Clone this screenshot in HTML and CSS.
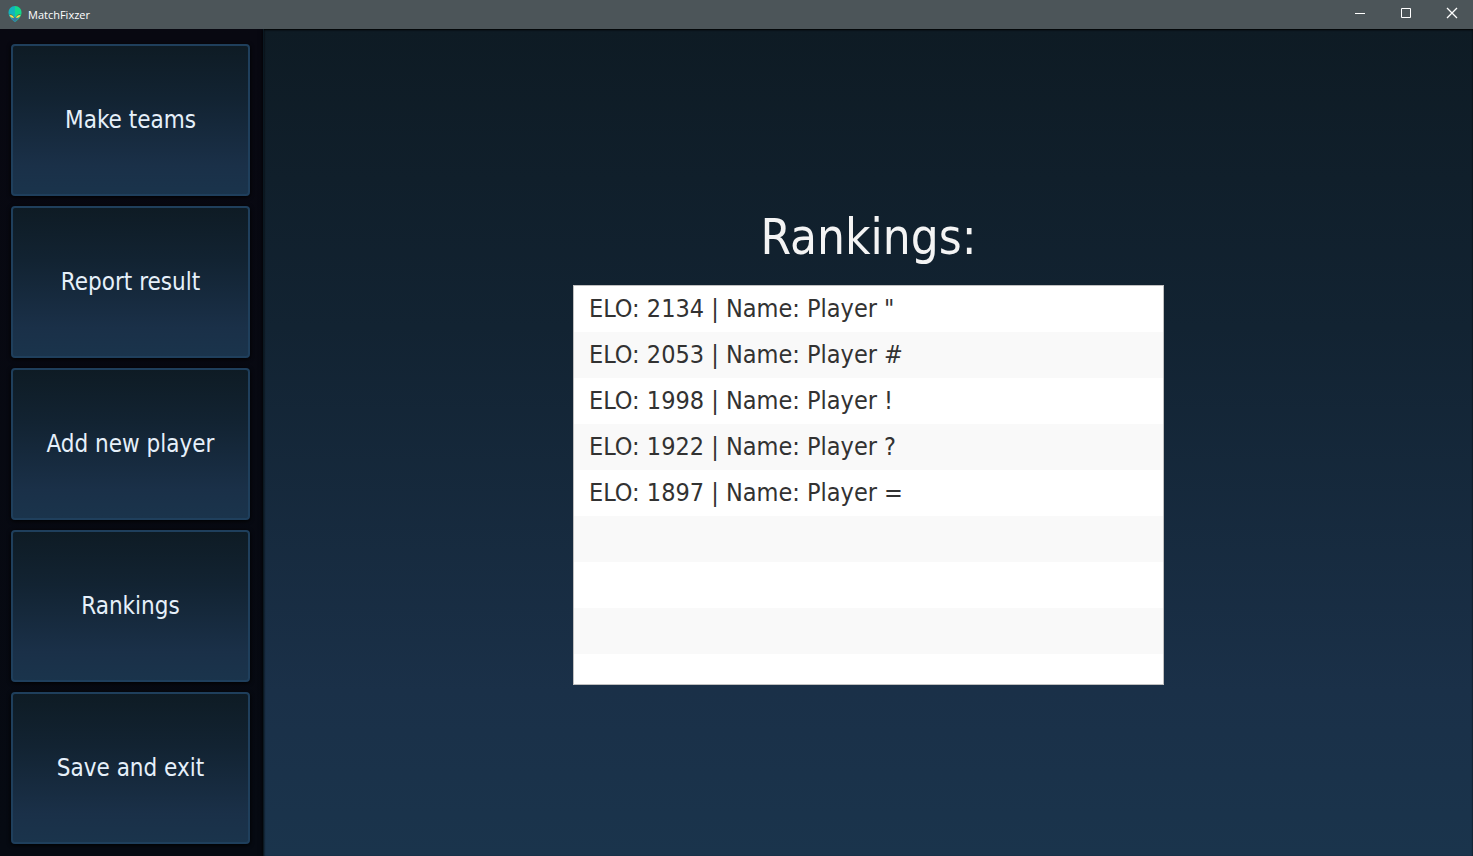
FILE: index.html
```html
<!DOCTYPE html>
<html lang="en">
<head>
<meta charset="utf-8">
<title>MatchFixzer</title>
<link rel="stylesheet" href="styles.css">
</head>
<body>
<header class="titlebar">
  <svg class="logo" viewBox="0 0 14 17" aria-hidden="true">
    <path fill="#12b4bd" d="M7 0C3 0 .5 3 .5 6.500c0 4 3.500 7.500 6.500 9.500z"/>
    <path fill="#13d88c" d="M7 0c4 0 6.500 3 6.500 6.500 0 4-3.500 7.500-6.500 9.500z"/>
    <path fill="#3d78a0" d="M3.500 12.500 7 11l3.500 1.500L7 16z"/>
    <path fill="#4a7a5c" d="M1.500 8c2.500 0 4.500 1.500 4.500 4-2.500 0-4-1.500-4.500-4zM12.500 8C10 8 8 9.500 8 12c2.500 0 4-1.500 4.500-4z"/>
    <path fill="#ffe14d" d="M1.500 9c2.500 0 4 1 4.500 3C4 12 2 11 1.500 9zM12.500 9C10 9 8.500 10 8 12c2 0 4-1 4.500-3z"/>
  </svg>
  <span class="app-name">MatchFixzer</span>
  <div class="window-controls">
    <button class="window-button" type="button" aria-label="Minimize"><svg class="glyph" viewBox="0 0 12 12"><path d="M1 6.500h10"/></svg></button>
    <button class="window-button" type="button" aria-label="Maximize"><svg class="glyph" viewBox="0 0 12 12"><path d="M1.500 1.500h9v9h-9z"/></svg></button>
    <button class="window-button" type="button" aria-label="Close"><svg class="glyph" viewBox="0 0 12 12"><path stroke-width="1.300" d="m1 1 10 10M11 1 1 11"/></svg></button>
  </div>
</header>
<div class="workspace">
  <nav class="sidebar">
    <button class="nav-button" type="button">Make teams</button>
    <button class="nav-button" type="button">Report result</button>
    <button class="nav-button" type="button">Add new player</button>
    <button class="nav-button" type="button">Rankings</button>
    <button class="nav-button" type="button">Save and exit</button>
  </nav>
  <main class="content">
    <h1 class="heading">Rankings:</h1>
    <ul class="ranking-list">
      <li class="ranking">ELO: 2134 | Name: Player "</li>
      <li class="ranking">ELO: 2053 | Name: Player #</li>
      <li class="ranking">ELO: 1998 | Name: Player !</li>
      <li class="ranking">ELO: 1922 | Name: Player ?</li>
      <li class="ranking">ELO: 1897 | Name: Player =</li>
    </ul>
  </main>
</div>
</body>
</html>
```
FILE: styles.css
```css
* {
  box-sizing: border-box;
}

body {
  margin: 0;
  min-height: 100vh;
  display: flex;
  flex-direction: column;
  background: #080a12;
  font-family: "DejaVu Sans Condensed", "Noto Sans", sans-serif;
}

.titlebar {
  height: 29px;
  flex: none;
  display: flex;
  align-items: center;
  padding-left: 8px;
  background: #4c5559;
  color: #fff;
}

.logo {
  width: 14px;
  height: 17px;
  margin-right: 6px;
}

.app-name {
  font-family: "Open Sans", "Noto Sans", sans-serif;
  font-size: 11px;
  line-height: 16px;
}

.window-controls {
  display: flex;
  align-self: stretch;
  margin-left: auto;
}

.window-button {
  width: 46px;
  display: flex;
  align-items: center;
  justify-content: center;
  padding: 0 0 3px 3px;
  border: 0;
  background: none;
}

.glyph {
  width: 12px;
  height: 12px;
  fill: none;
  stroke: #fff;
}

.workspace {
  flex: 1;
  display: flex;
  overflow: hidden;
}

.sidebar {
  width: 263px;
  flex: none;
  display: flex;
  flex-direction: column;
  gap: 10px;
  padding: 15px 13px 12px 11px;
  background: linear-gradient(#080811, #060a12);
}

.nav-button {
  flex: 1;
  border: 2px solid #1f3f5c;
  border-radius: 4px;
  background: linear-gradient(#0e1b24, #122332 36%, #1a3048 80%, #1a344c) border-box;
  box-shadow: 0 1px 4px #000;
  color: #e6f0fa;
  font-family: inherit;
  font-size: 24px;
}

.content {
  flex: 1;
  display: flex;
  flex-direction: column;
  align-items: center;
  justify-content: center;
  gap: 10px;
  border-left: 1px solid #0a1821;
  background: linear-gradient(#0e1b24, #122332 36%, #1a3048 80%, #1a344c);
  box-shadow: 0 0 4px #000, inset 0 1px 2px #000;
}

.heading {
  margin: 0;
  color: #f4f4f4;
  font-size: 49px;
  font-weight: 400;
  line-height: 75px;
}

.ranking-list {
  width: 591px;
  max-width: 100%;
  min-height: 400px;
  margin: 0;
  padding: 0;
  border: 1px solid #c0c0c0;
  background: repeating-linear-gradient(#fff 0 46px, #f9f9f9 46px 92px);
  color: #323232;
  list-style: none;
}

.ranking {
  padding: 0 15px;
  font-size: 25px;
  line-height: 46px;
}
```
